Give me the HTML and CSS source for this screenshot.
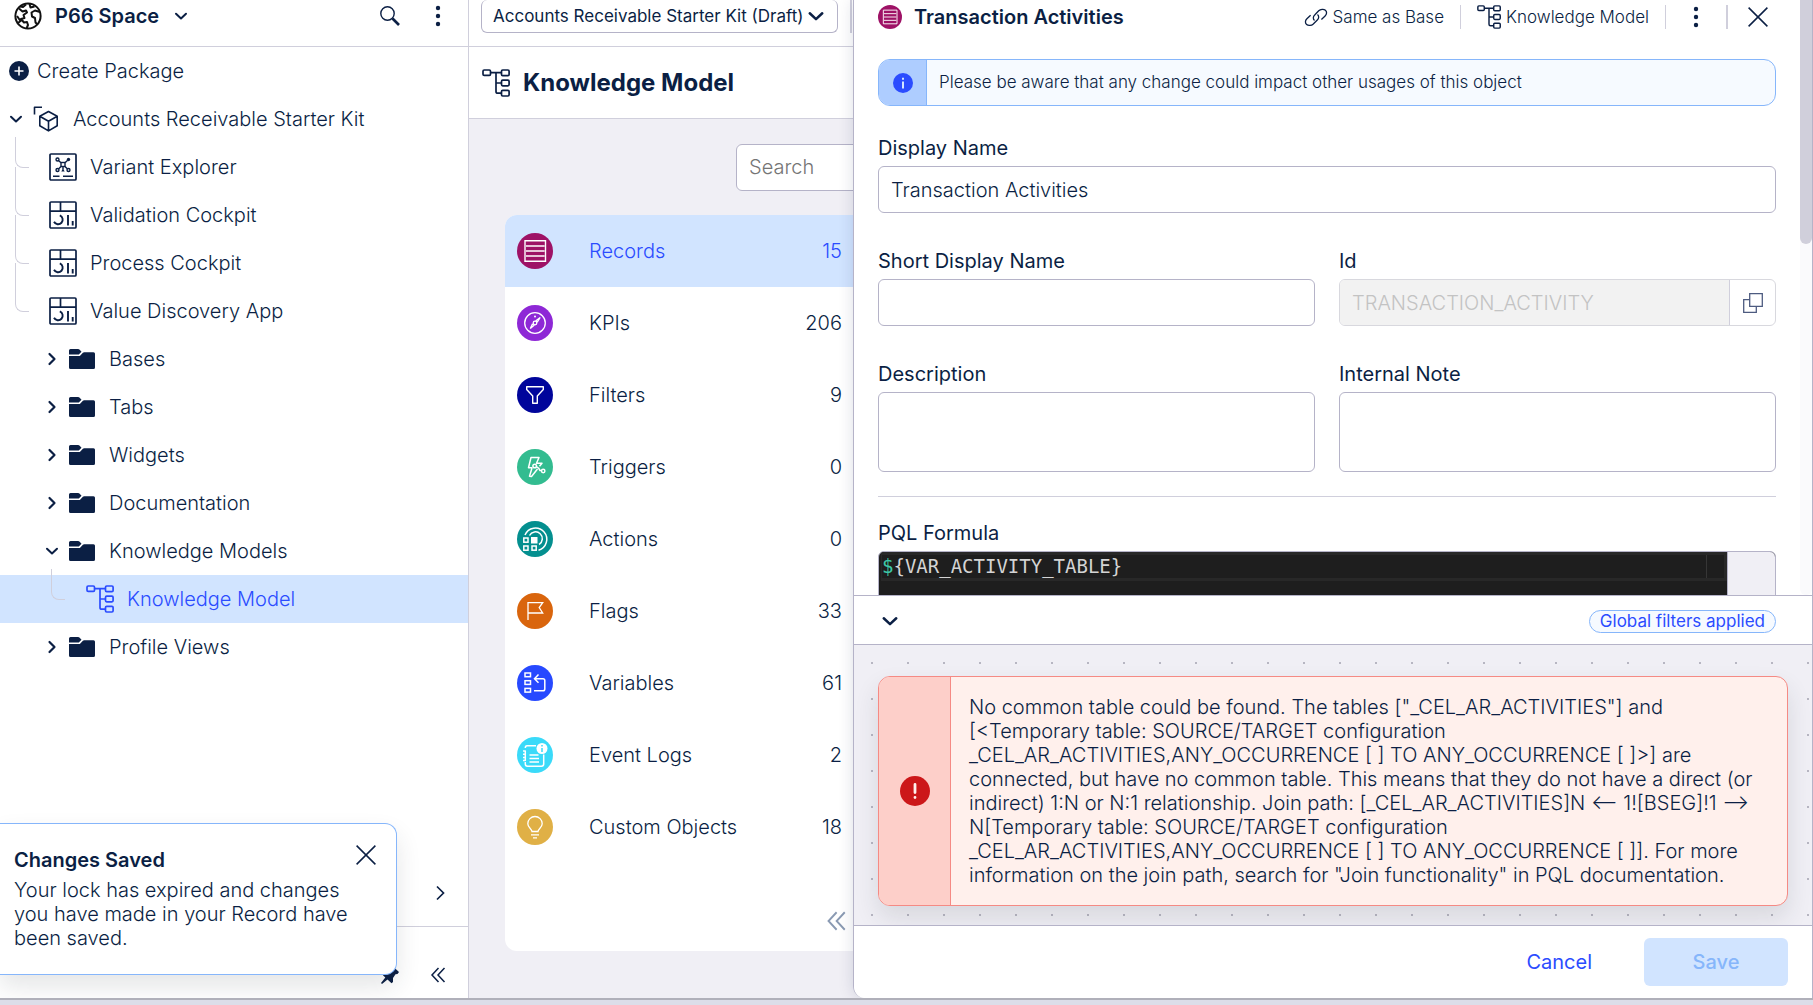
FILE: index.html
```html
<!DOCTYPE html>
<html lang="en">
<head>
<meta charset="utf-8">
<title>Knowledge Model - Transaction Activities</title>
<meta name="viewport" content="width=device-width, initial-scale=1">
<link rel="stylesheet" href="styles.css">
</head>
<body>
<svg class="sprite" aria-hidden="true">
  <symbol id="i-model" viewBox="0 0 28 28"><g fill="none" stroke="currentColor" stroke-width="1.7"><rect x="1" y="1" width="7.5" height="5.4" rx="1.2"/><rect x="19.5" y="1" width="7.6" height="5.6" rx="1.2"/><rect x="19.5" y="11.2" width="7.6" height="5.6" rx="1.2"/><rect x="19.5" y="21.4" width="7.6" height="5.6" rx="1.2"/><path d="M8.5 3.7h11M14 3.7V22.400q0 1.800 1.800 1.800h3.700M14 14h5.500"/></g></symbol>
  <symbol id="i-cockpit" viewBox="0 0 28 28"><g fill="none" stroke="currentColor" stroke-width="1.7"><rect x="1" y="1" width="26" height="26" rx="1"/><path d="M1 10.200h26M11.500 1v9.200"/><path stroke-width="1.900" d="M10.800 14.400a4.600 4.600 0 1 1-5.800 6.400M19 14v10.500M23.700 20v4.500"/></g></symbol>
  <symbol id="i-folder" viewBox="0 0 26 20"><path fill="currentColor" d="M1.500 0H9q1 0 1.700.8L12.500 2.800 9.800 5.400H0V1.500Q0 0 1.500 0ZM0 7h10.300q.6 0 1-.5l2.600-2.800q.5-.5 1.300-.5h9.300Q26 3.200 26 4.700v13.800q0 1.500-1.500 1.500h-23Q0 20 0 18.500Z"/></symbol>
  <symbol id="i-down" viewBox="0 0 16 16"><path fill="none" stroke="currentColor" stroke-width="2" stroke-linecap="round" stroke-linejoin="round" d="M3 5.800l5 4.700 5-4.700"/></symbol>
  <symbol id="i-right" viewBox="0 0 16 16"><path fill="none" stroke="currentColor" stroke-width="2.200" stroke-linecap="round" stroke-linejoin="round" d="M5.500 3l5 5-5 5"/></symbol>
  <symbol id="i-close" viewBox="0 0 20 20"><path fill="none" stroke="currentColor" stroke-width="1.500" d="M.6.6l18.800 18.800M19.400.6.6 19.400"/></symbol>
  <symbol id="i-collapse" viewBox="0 0 16 16"><path fill="none" stroke="currentColor" stroke-width="1.500" d="M8.500 1L2 8l6.500 7M14.500 1L8 8l6.500 7"/></symbol>
  <symbol id="i-dots" viewBox="0 0 6 22"><g fill="currentColor"><circle cx="3" cy="3" r="2.200"/><circle cx="3" cy="11" r="2.200"/><circle cx="3" cy="19" r="2.200"/></g></symbol>
  <symbol id="i-records" viewBox="0 0 36 36"><circle cx="18" cy="18" r="18" fill="#9e1266"/><path fill="none" stroke="#fff" stroke-width="1.400" d="M8 7.700h20.500v20.500H8zM9 13h18.500M9 18h18.500M9 23h18.500"/></symbol>
</svg>

<div class="app">
  <aside class="sidebar">
    <header class="space-bar">
      <svg class="ic-globe" viewBox="0 0 28 28" aria-hidden="true"><g fill="none" stroke="#111" stroke-width="2" stroke-linejoin="round"><circle cx="14" cy="14" r="12.600"/><path d="M6 4.500l3 .5 3-2.500M5 6.500l3.500 3 3.500-1 1 2-3.500 2.500 1 3-3.500 1 3 3.500 3-.5 1 3-1.500 3.500M15.500 2l1 3.500 4-1M26 10l-5-1.500-3.500 2 .5 4 3 1.500.5 4.500 2 2M4 21l2.500-2-3.500-5"/></g></svg>
      <button class="space-name" type="button">P66 Space <svg class="s16" aria-hidden="true"><use href="#i-down"/></svg></button>
      <button class="icon-btn search-btn" type="button" aria-label="Search"><svg class="s20" viewBox="0 0 20 20"><circle cx="7.500" cy="7.500" r="6.700" fill="none" stroke="currentColor" stroke-width="1.400"/><path d="M12.500 12.500l6.500 6.500" stroke="currentColor" stroke-width="2.600" fill="none"/></svg></button>
      <button class="icon-btn" type="button" aria-label="More options"><svg class="dots"><use href="#i-dots"/></svg></button>
    </header>

    <nav class="tree" aria-label="Packages">
      <button class="row create" type="button"><svg class="s20" viewBox="0 0 20 20" aria-hidden="true"><circle cx="10" cy="10" r="10" fill="currentColor"/><path d="M5.500 10h9M10 5.500v9" stroke="#fff" stroke-width="1.600"/></svg>Create Package</button>
      <a class="row package" href="#"><svg class="s16" aria-hidden="true"><use href="#i-down"/></svg><svg class="ic-package" viewBox="0 0 26 26" aria-hidden="true"><g fill="none" stroke="currentColor" stroke-width="1.600" stroke-linejoin="round"><path d="M1.500 8.500V1.300h7.500"/><path d="M15.500 5.500l8.700 4.800v9.400l-8.700 5.200-8.700-5.200v-9.400zM6.800 10.300l8.700 5 8.700-5M15.500 15.300v9.500"/></g></svg>Accounts Receivable Starter Kit</a>
      <ul class="branch">
        <li><a class="row asset" href="#"><svg class="s28" viewBox="0 0 28 28" aria-hidden="true"><g fill="none" stroke="currentColor" stroke-width="1.400"><rect x="1" y="1" width="26" height="26" rx="1" stroke-width="1.700"/><rect x="12" y="9.500" width="4" height="4"/><circle cx="8.500" cy="6.500" r="1.500"/><circle cx="8.500" cy="17" r="1.500"/><circle cx="19.500" cy="17" r="1.500"/><path d="M9.700 7.700l2.300 2M16 9.700l2.700-2.500M12 13.500l-2.300 2.300M16 13.500l2.300 2.300M14 13.500v3M4 23.300h6.500M14 23.300h10"/></g><circle cx="19.500" cy="6.500" r="1.700" fill="currentColor"/><path d="M12.300 18.500l1.700-3 1.700 3z" fill="currentColor"/></svg>Variant Explorer</a></li>
        <li><a class="row asset" href="#"><svg class="s28" aria-hidden="true"><use href="#i-cockpit"/></svg>Validation Cockpit</a></li>
        <li><a class="row asset" href="#"><svg class="s28" aria-hidden="true"><use href="#i-cockpit"/></svg>Process Cockpit</a></li>
        <li><a class="row asset" href="#"><svg class="s28" aria-hidden="true"><use href="#i-cockpit"/></svg>Value Discovery App</a></li>
      </ul>
      <a class="row folder" href="#"><svg class="s16" aria-hidden="true"><use href="#i-right"/></svg><svg class="ic-folder" aria-hidden="true"><use href="#i-folder"/></svg>Bases</a>
      <a class="row folder" href="#"><svg class="s16" aria-hidden="true"><use href="#i-right"/></svg><svg class="ic-folder" aria-hidden="true"><use href="#i-folder"/></svg>Tabs</a>
      <a class="row folder" href="#"><svg class="s16" aria-hidden="true"><use href="#i-right"/></svg><svg class="ic-folder" aria-hidden="true"><use href="#i-folder"/></svg>Widgets</a>
      <a class="row folder" href="#"><svg class="s16" aria-hidden="true"><use href="#i-right"/></svg><svg class="ic-folder" aria-hidden="true"><use href="#i-folder"/></svg>Documentation</a>
      <a class="row folder" href="#"><svg class="s16" aria-hidden="true"><use href="#i-down"/></svg><svg class="ic-folder" aria-hidden="true"><use href="#i-folder"/></svg>Knowledge Models</a>
      <ul class="branch branch-inner">
        <li><a class="row model" href="#" aria-current="page"><svg class="s28" aria-hidden="true"><use href="#i-model"/></svg>Knowledge Model</a></li>
      </ul>
      <a class="row folder" href="#"><svg class="s16" aria-hidden="true"><use href="#i-right"/></svg><svg class="ic-folder" aria-hidden="true"><use href="#i-folder"/></svg>Profile Views</a>
    </nav>

    <div class="side-more"><button class="icon-btn" type="button" aria-label="Expand section"><svg class="s16" viewBox="0 0 16 16"><path fill="none" stroke="currentColor" stroke-width="1.700" d="M5 1.500L11.500 8 5 14.500"/></svg></button></div>
    <footer class="side-foot">
      <button class="icon-btn" type="button" aria-label="Pin sidebar"><svg class="s20" viewBox="0 0 20 20"><path fill="currentColor" d="M12.500 1l6.500 6-1.500 2-2 .3-2.500 3.700v4l-1.500 1.200-4-3.700L2 19l-1-1 4.300-5.500L2 9.200 3.300 8h3.900L11 5l.2-2.500z"/></svg></button>
      <button class="icon-btn" type="button" aria-label="Collapse sidebar"><svg class="s16"><use href="#i-collapse"/></svg></button>
    </footer>
  </aside>

  <main class="main">
    <div class="top-bar">
      <div class="version">
        <select aria-label="Package version"><option>Accounts Receivable Starter Kit (Draft)</option></select>
        <svg class="s20 version-arrow" aria-hidden="true"><use href="#i-down"/></svg>
      </div>
      <span class="bar-divider"></span>
    </div>
    <div class="title-bar"><svg class="s28" aria-hidden="true"><use href="#i-model"/></svg><h1>Knowledge Model</h1></div>
    <div class="canvas">
      <div class="search-row"><input type="search" placeholder="Search" aria-label="Search"></div>
      <div class="card">
        <ul class="kinds">
          <li><a class="kind active" href="#"><svg class="s36" aria-hidden="true"><use href="#i-records"/></svg><span>Records</span><span class="count">15</span></a></li>
          <li><a class="kind" href="#"><svg class="s36" viewBox="0 0 36 36" aria-hidden="true"><circle cx="18" cy="18" r="18" fill="#8e28d6"/><g fill="none" stroke="#fff" stroke-width="1.300"><circle cx="18" cy="18" r="10.300"/><circle cx="18" cy="18" r="1.800"/><path d="M19.200 15.500l4-3-2.700 4.300zM16.800 20.500l-3.500 3 2-4.200z"/></g><circle cx="18" cy="11.500" r="1" fill="#fff"/></svg><span>KPIs</span><span class="count">206</span></a></li>
          <li><a class="kind" href="#"><svg class="s36" viewBox="0 0 36 36" aria-hidden="true"><circle cx="18" cy="18" r="18" fill="#00059b"/><path fill="none" stroke="#fff" stroke-width="1.400" stroke-linejoin="round" d="M9.700 9.700h16.600v2.800l-6 6.500v7.300h-4.600V19l-6-6.500z"/></svg><span>Filters</span><span class="count">9</span></a></li>
          <li><a class="kind" href="#"><svg class="s36" viewBox="0 0 36 36" aria-hidden="true"><circle cx="18" cy="18" r="18" fill="#33bc90"/><g fill="none" stroke="#fff" stroke-width="1.500" stroke-linejoin="round"><path d="M15.500 18.800h-4L14 8.500h8l-2.500 5.700h5.500l-2.500 3M15 19l-2.500 8.300 2 .2 6-7.500"/><circle cx="17.700" cy="17" r="1.800"/><circle cx="26.200" cy="22" r="1.700"/><path d="M19.300 17.500l2.500 1.800 1.200 2.300h1.500"/></g></svg><span>Triggers</span><span class="count">0</span></a></li>
          <li><a class="kind" href="#"><svg class="s36" viewBox="0 0 36 36" aria-hidden="true"><circle cx="18" cy="18" r="18" fill="#048f8f"/><g fill="none" stroke="#fff" stroke-width="1.500"><rect x="6.800" y="17" width="4.200" height="4.200"/><rect x="6.800" y="25" width="4.200" height="4.200"/><rect x="15" y="25" width="4.200" height="4.200"/><path d="M8 14a11.300 11.300 0 1 1 13.500 15.200M12.500 14.500a6.800 6.800 0 1 1 9.500 9"/></g><path fill="#fff" d="M14 16h6.500v6.500H14z"/></svg><span>Actions</span><span class="count">0</span></a></li>
          <li><a class="kind" href="#"><svg class="s36" viewBox="0 0 36 36" aria-hidden="true"><circle cx="18" cy="18" r="18" fill="#d9650d"/><path fill="none" stroke="#fff" stroke-width="1.300" d="M11 27V9.700h14.700L22.200 14.500l3.500 5.500H11"/></svg><span>Flags</span><span class="count">33</span></a></li>
          <li><a class="kind" href="#"><svg class="s36" viewBox="0 0 36 36" aria-hidden="true"><circle cx="18" cy="18" r="18" fill="#2749ff"/><g fill="none" stroke="#fff" stroke-width="1.500"><rect x="8" y="8" width="5.500" height="3.700"/><rect x="8" y="15.700" width="5.500" height="3.700"/><rect x="8" y="23.400" width="5.500" height="3.700"/><path d="M17 25.800h9q1.800 0 1.800-1.800v-8.500q0-1.800-1.800-1.800h-8.500M21.500 9.500l-4 4.200 4 4"/></g></svg><span>Variables</span><span class="count">61</span></a></li>
          <li><a class="kind" href="#"><svg class="s36" viewBox="0 0 36 36" aria-hidden="true"><circle cx="18" cy="18" r="18" fill="#3adaf9"/><g fill="none" stroke="#fff" stroke-width="1.500"><path d="M19 8.700h-9q-1.700 0-1.700 2.300M8.300 25v2q0 2.200 2.200 2.200h14q2.200 0 2.200-2.200v-9.500M8.300 13.500V24M6 14h2.500M6 17.200h2.500M6 20.400h2.500M6 23.600h2.500M12.500 18h9M12.500 21.500h9.500M12.500 25h9.500"/></g><circle cx="25" cy="11.500" r="5.500" fill="#fff"/><path stroke="#3adaf9" stroke-width="1.500" d="M25 8v1.500M25 11v4"/></svg><span>Event Logs</span><span class="count">2</span></a></li>
          <li><a class="kind" href="#"><svg class="s36" viewBox="0 0 36 36" aria-hidden="true"><circle cx="18" cy="18" r="18" fill="#e0b046"/><path fill="none" stroke="#fff" stroke-width="1.300" d="M15 22.500c0-2.500-4.200-4-4.200-7.800a7.200 7.200 0 0 1 14.400 0c0 3.800-4.200 5.300-4.200 7.800zM14 25.800h8M16 28.800h4"/></svg><span>Custom Objects</span><span class="count">18</span></a></li>
        </ul>
        <div class="card-foot"><button class="icon-btn muted" type="button" aria-label="Collapse list"><svg class="s20" viewBox="0 0 16 16"><path fill="none" stroke="currentColor" stroke-width="1.500" d="M8.500 1L2 8l6.500 7M15 1L8.500 8l6.500 7"/></svg></button></div>
      </div>
    </div>
  </main>

  <section class="drawer" aria-label="Transaction Activities">
    <div class="drawer-scroll">
      <div class="drawer-body">
        <header class="drawer-head">
          <svg class="s24" aria-hidden="true"><use href="#i-records"/></svg>
          <h2>Transaction Activities</h2>
          <a class="ref" href="#"><svg class="s24" viewBox="0 0 24 24" aria-hidden="true"><g fill="none" stroke="currentColor" stroke-width="1.300"><path d="M10.500 15.500c-1.700-1.500-1.500-4 .2-5.500l4-4.200c1.800-1.700 5-2 6.700-.5s1.500 4-.3 5.700l-3.700 3.500"/><path d="M13.500 9.500c1.700 1.500 1.500 4-.2 5.500l-4 4c-1.800 1.700-5 2-6.700.5s-1.500-4 .3-5.700l3.700-3.500"/></g></svg>Same as Base</a>
          <span class="sep"></span>
          <a class="ref" href="#"><svg class="s24" aria-hidden="true"><use href="#i-model"/></svg>Knowledge Model</a>
          <span class="sep"></span>
          <button class="icon-btn menu-btn" type="button" aria-label="More options"><svg class="dots"><use href="#i-dots"/></svg></button>
          <span class="sep sep-strong"></span>
          <button class="icon-btn" type="button" aria-label="Close"><svg class="s20"><use href="#i-close"/></svg></button>
        </header>

        <div class="notice" role="note">
          <div class="notice-icon"><svg class="s20" viewBox="0 0 20 20" aria-hidden="true"><circle cx="10" cy="10" r="10" fill="#2b4cff"/><path stroke="#d3e5ff" stroke-width="2" d="M10 4.700v2M10 8.500v7"/></svg></div>
          <p>Please be aware that any change could impact other usages of this object</p>
        </div>

        <form class="fields">
          <div class="field wide"><label for="display-name">Display Name</label><input id="display-name" type="text" value="Transaction Activities"></div>
          <div class="field"><label for="short-name">Short Display Name</label><input id="short-name" type="text"></div>
          <div class="field"><label for="object-id">Id</label>
            <div class="id-box"><input id="object-id" type="text" value="TRANSACTION_ACTIVITY" disabled><button type="button" aria-label="Copy id"><svg class="s20" viewBox="0 0 20 20"><path fill="none" stroke="currentColor" stroke-width="1.300" d="M6.700.7h12.600v12.600H6.700zM6.700 6.700h-6v12.600h12.600v-6"/></svg></button></div>
          </div>
          <div class="field"><label for="description">Description</label><textarea id="description"></textarea></div>
          <div class="field"><label for="note">Internal Note</label><textarea id="note"></textarea></div>
        </form>

        <div class="formula">
          <h3>PQL Formula</h3>
          <div class="editor">
            <div class="code"><div class="code-line"><code><span class="dollar">$</span>{VAR_ACTIVITY_TABLE}</code></div></div>
            <div class="editor-side"></div>
          </div>
        </div>
      </div>
      <div class="track"><div class="thumb"></div></div>
    </div>

    <div class="preview-bar">
      <button class="icon-btn" type="button" aria-label="Collapse preview"><svg class="s20"><use href="#i-down"/></svg></button>
      <button class="pill" type="button">Global filters applied</button>
    </div>
    <div class="preview">
      <div class="error" role="alert">
        <div class="error-icon"><svg class="s30" viewBox="0 0 30 30" aria-hidden="true"><circle cx="15" cy="15" r="15" fill="#cc1719"/><path stroke="#fff0ec" stroke-width="2.800" stroke-linecap="round" d="M15 8.500v8M15 21.300v.2"/></svg></div>
        <p>No common table could be found. The tables ["_CEL_AR_ACTIVITIES"] and [&lt;Temporary table: SOURCE/TARGET configuration _CEL_AR_ACTIVITIES,ANY_OCCURRENCE [ ] TO ANY_OCCURRENCE [ ]&gt;] are connected, but have no common table. This means that they do not have a direct (or indirect) 1:N or N:1 relationship. Join path: [_CEL_AR_ACTIVITIES]N &lt;-- 1![BSEG]!1 --&gt; N[Temporary table: SOURCE/TARGET configuration _CEL_AR_ACTIVITIES,ANY_OCCURRENCE [ ] TO ANY_OCCURRENCE [ ]]. For more information on the join path, search for "Join functionality" in PQL documentation.</p>
      </div>
    </div>
    <footer class="drawer-foot">
      <button class="btn-text" type="button">Cancel</button>
      <button class="btn-fill" type="button" disabled>Save</button>
    </footer>
  </section>

  <div class="toast" role="status">
    <div class="toast-text"><h2>Changes Saved</h2><p>Your lock has expired and changes you have made in your Record have been saved.</p></div>
    <button class="icon-btn" type="button" aria-label="Dismiss"><svg class="s20"><use href="#i-close"/></svg></button>
  </div>
</div>
</body>
</html>
```
FILE: styles.css
```css
:root {
  --ink: #0b1f44;
  --blue: #2b4cff;
  --line: #d0cfdc;
  --edge: #b5b3c8;
  --canvas: #f0eff5;
  --select: #d1e4ff;
}

* { box-sizing: border-box; }

body {
  margin: 0;
  height: 100vh;
  padding-bottom: 5px;
  background: #dcdde9;
  color: var(--ink);
  font: 300 20px/24px Inter, "Liberation Sans", sans-serif;
  overflow: hidden;
}

h1, h2, h3, p, ul { margin: 0; padding: 0; }
ul { list-style: none; }
a { color: inherit; text-decoration: none; }
button, input, select, textarea { font: inherit; color: inherit; }
button { padding: 0; border: 0; background: none; cursor: pointer; }
svg { display: block; flex: none; }

.sprite { position: absolute; width: 0; height: 0; }
.s16 { width: 16px; height: 16px; }
.s20 { width: 20px; height: 20px; }
.s24 { width: 24px; height: 24px; }
.s28 { width: 28px; height: 28px; }
.s30 { width: 30px; height: 30px; }
.s36 { width: 36px; height: 36px; }
.dots { width: 6px; height: 22px; }

.icon-btn { display: flex; align-items: center; justify-content: center; }
.muted { color: #8a9ab3; }

.app {
  position: relative;
  display: grid;
  grid-template-columns: 469px 1fr;
  height: 100%;
  border-bottom: 2px solid #b0b0ba;
  overflow: hidden;
  background: #fff;
}

/* Sidebar */
.sidebar {
  display: flex;
  flex-direction: column;
  min-height: 0;
  border-right: 1px solid var(--line);
}

.space-bar {
  display: flex;
  align-items: center;
  height: 47px;
  padding: 0 27px 14px 14px;
  border-bottom: 1px solid var(--line);
}

.ic-globe { width: 28px; height: 28px; }

.space-name {
  display: flex;
  align-items: center;
  gap: 14px;
  margin-left: 13px;
  font-weight: 600;
}

.search-btn { margin: 0 35px 0 auto; }

.tree { flex: 1; min-height: 0; }

.row {
  display: flex;
  align-items: center;
  width: 100%;
  height: 48px;
  text-align: left;
}

.create { gap: 8px; padding-left: 9px; }
.package { padding-left: 8px; }
.ic-package { width: 26px; height: 26px; margin: 0 14px 0 9px; }
.asset { gap: 13px; padding-left: 49px; }
.folder { padding-left: 44px; }
.ic-folder { width: 26px; height: 20px; margin: 0 14px 0 9px; }
.model { gap: 13px; padding-left: 86px; background: var(--select); color: var(--blue); }

.branch li { position: relative; }

.branch li::before {
  content: "";
  position: absolute;
  left: 15px;
  top: -24px;
  width: 13px;
  height: 48px;
  border: solid var(--line);
  border-width: 0 0 1px 1px;
  border-bottom-left-radius: 8px;
}

.branch li:first-child::before { top: -6px; height: 30px; }
.branch-inner li::before { left: 51px; }

.side-more {
  display: flex;
  justify-content: flex-end;
  padding: 0 20px 25px;
  border-bottom: 1px solid var(--line);
}

.side-foot {
  display: flex;
  align-items: center;
  justify-content: flex-end;
  gap: 30px;
  height: 71px;
  padding: 24px 22px 0;
}

/* Main column */
.main {
  display: flex;
  flex-direction: column;
  min-width: 0;
  background: var(--canvas);
}

.top-bar {
  display: flex;
  gap: 12px;
  height: 47px;
  padding: 0 12px 13px;
  border-bottom: 1px solid var(--line);
  background: #fff;
}

.version { position: relative; width: 357px; }

.version select {
  width: 100%;
  height: 100%;
  padding: 0 32px 1px 11px;
  border: 1px solid var(--edge);
  border-top: 0;
  border-radius: 6px;
  background: #fff;
  font-size: 17px;
  font-weight: 400;
  appearance: none;
}

.version-arrow { position: absolute; right: 12px; top: 6px; pointer-events: none; }
.bar-divider { width: 2px; background: var(--line); }

.title-bar {
  display: flex;
  align-items: center;
  gap: 13px;
  height: 72px;
  padding: 0 13px;
  border-bottom: 1px solid var(--line);
  background: #fff;
}

h1 { font-size: 24px; line-height: 32px; font-weight: 700; }

.canvas { width: 432px; padding: 25px 36px 0; }
.search-row { display: flex; padding: 0 0 24px 231px; }

.search-row input {
  flex: 1;
  min-width: 0;
  height: 47px;
  padding: 0 12px 1px;
  border: 1px solid var(--edge);
  border-radius: 6px;
  background: #fff;
  appearance: none;
}

.search-row input::placeholder { color: #757575; }

.card { border-radius: 12px; background: #fff; overflow: hidden; }

.kind {
  display: flex;
  align-items: center;
  gap: 36px;
  height: 72px;
  padding: 0 23px 0 12px;
}

.kind.active { background: var(--select); color: var(--blue); }
.count { margin-left: auto; }
.card-foot { display: flex; justify-content: flex-end; padding: 48px 19px 20px; }

/* Record drawer */
.drawer {
  position: absolute;
  top: 0;
  right: 0;
  bottom: 0;
  display: flex;
  flex-direction: column;
  width: 960px;
  border: solid var(--edge);
  border-width: 0 1px;
  border-bottom-left-radius: 12px;
  background: #fff;
  box-shadow: 0 0 16px rgba(11, 31, 68, .14);
  overflow: hidden;
}

.drawer-scroll { display: flex; flex: 1; min-height: 0; }
.drawer-body { flex: 1; min-width: 0; padding: 0 24px; overflow: hidden; }
.track { width: 12px; border-radius: 0 0 6px 6px; background: #fafafc; }
.thumb { height: 41%; border-radius: 0 0 6px 6px; background: #d0cfdb; }

.drawer-head { display: flex; align-items: center; height: 34px; padding-right: 8px; }
.drawer-head h2 { margin: 0 auto 0 12px; font-size: 20px; font-weight: 600; }
.ref { display: flex; align-items: center; gap: 5px; font-size: 17px; font-weight: 300; }
.sep { width: 1px; height: 24px; margin: 0 16px; background: var(--line); }
.sep-strong { width: 2px; margin-right: 20px; }
.menu-btn { margin: 0 11px; }

.notice {
  display: flex;
  height: 47px;
  margin: 25px 0 30px;
  border: 1px solid #86b6fb;
  border-radius: 12px;
  background: #f6faff;
  overflow: hidden;
  font-size: 17px;
}

.notice-icon {
  display: flex;
  align-items: center;
  justify-content: center;
  width: 48px;
  border-right: 1px solid #86b6fb;
  background: #aecdff;
}

.notice p { padding: 10px 12px; }

.fields {
  display: grid;
  grid-template-columns: 1fr 1fr;
  gap: 36px 24px;
  padding-bottom: 24px;
  border-bottom: 1px solid var(--line);
}

.field { display: flex; flex-direction: column; gap: 6px; }
.wide { grid-column: span 2; }
.field label, h3 { font-size: 20px; font-weight: 400; }

.field input, .field textarea {
  width: 100%;
  height: 47px;
  padding: 0 12px;
  border: 1px solid var(--edge);
  border-radius: 6px;
  background: #fff;
}

.field textarea { height: 80px; resize: none; }

.id-box {
  display: flex;
  border: 1px solid #d8d8de;
  border-radius: 6px;
  background: #fff;
  overflow: hidden;
}

.field .id-box input {
  flex: 1;
  min-width: 0;
  height: 45px;
  border: 0;
  border-radius: 0;
  background: #f2f2f2;
  color: #c3c3c3;
}

.id-box button {
  display: flex;
  align-items: center;
  justify-content: center;
  width: 46px;
  border-left: 1px solid #d0cfdc;
  color: #4d5b80;
}

.formula { display: flex; flex-direction: column; gap: 6px; padding-top: 24px; }

.editor {
  display: flex;
  height: 160px;
  border: 1px solid var(--edge);
  border-radius: 6px;
  background: #1e1e1e;
  overflow: hidden;
}

.code { flex: 1; padding-left: 2px; }

.code-line {
  height: 29px;
  border: 3px solid #282828;
  border-left-width: 1px;
  background: linear-gradient(#363636, #363636) right 17px top / 1px 100% no-repeat;
}

.code-line code { display: block; font: 19px/22px "DejaVu Sans Mono", monospace; color: #d4d4d4; }
.code-line .dollar { color: #3dc9a8; }
.editor-side { width: 48px; border-left: 1px solid var(--edge); background: var(--canvas); }

.preview-bar {
  display: flex;
  align-items: center;
  justify-content: space-between;
  height: 50px;
  padding: 2px 36px 0 26px;
  border: solid var(--edge);
  border-width: 1px 0;
  background: #fff;
}

.pill {
  height: 23px;
  padding: 0 10px;
  border: 1px solid #86b6fb;
  border-radius: 12px;
  background: #f6faff;
  color: var(--blue);
  font-size: 17px;
  line-height: 20px;
  font-weight: 400;
}

.preview {
  padding: 31px 24px 19px;
  background: radial-gradient(circle, #b7b6c2 1px, transparent 1px) 0 0 / 36px 36px var(--canvas);
  overflow: hidden;
}

.error {
  display: flex;
  border: 1px solid #f58a84;
  border-radius: 12px;
  background: #fff0ec;
  box-shadow: 0 12px 24px rgba(40, 50, 60, .12);
  overflow: hidden;
}

.error-icon {
  display: flex;
  align-items: center;
  justify-content: center;
  flex: none;
  width: 72px;
  border-right: 1px solid #f58a84;
  background: #fdcfc9;
}

.error p { flex: 1; padding: 18px; }

.drawer-foot {
  display: flex;
  align-items: center;
  justify-content: flex-end;
  gap: 52px;
  height: 73px;
  padding: 0 24px;
  border-top: 1px solid var(--edge);
  background: #fff;
}

.btn-text { font-weight: 400; color: var(--blue); }

.btn-fill {
  width: 144px;
  height: 48px;
  border-radius: 6px;
  background: var(--select);
  color: #86b6fb;
  font-weight: 500;
}

/* Toast over the sidebar */
.toast {
  position: absolute;
  left: 0;
  bottom: 23px;
  display: flex;
  align-items: flex-start;
  width: 397px;
  padding: 21px 20px 24px 14px;
  border: 1px solid #86b6fb;
  border-left: 0;
  border-radius: 0 12px 12px 0;
  background: #fff;
  box-shadow: 0 12px 24px rgba(40, 50, 60, .12);
}

.toast-text { flex: 1; padding-top: 3px; }
.toast h2 { margin-bottom: 6px; font-size: 20px; font-weight: 600; }
```
